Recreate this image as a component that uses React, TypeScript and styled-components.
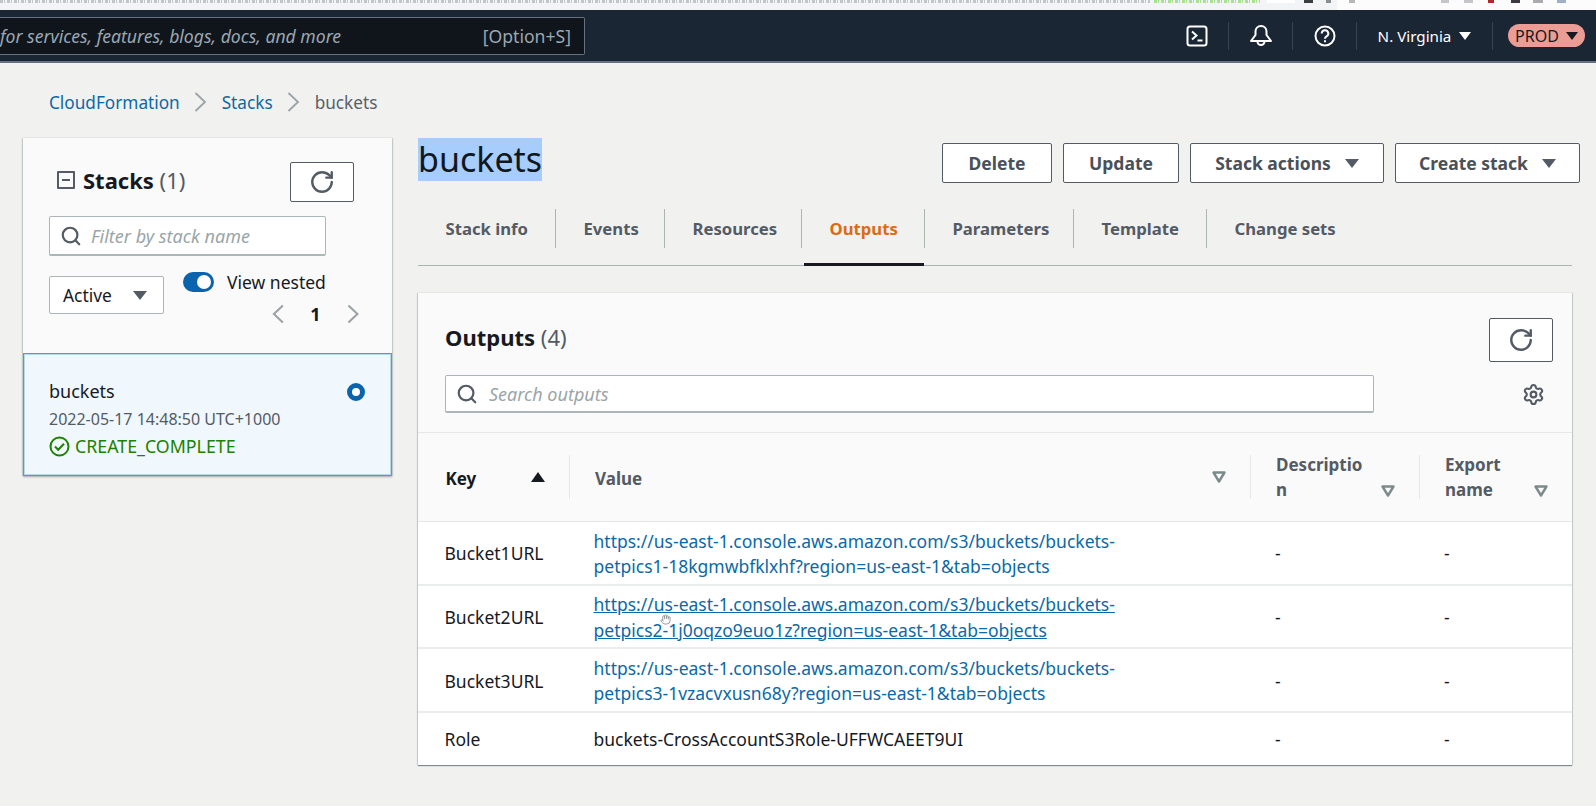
import { FC, ReactNode } from "react";
import styled, { createGlobalStyle } from "styled-components";
import { Hand, RotateCw, Search, Settings } from "lucide-react";

const FONT = `"Noto Sans", "Open Sans", sans-serif`;

const GlobalStyle = createGlobalStyle`
  html, body {
    margin: 0;
    padding: 0;
    background: #f1f1f0;
    font-family: ${FONT};
    font-size: 18px;
    color: #16191f;
  }
  body {
    width: 1596px;
    height: 806px;
    overflow: hidden;
  }
  * {
    box-sizing: border-box;
  }
`;

// the cropped browser address bar: only specks of it are visible
const BrowserStrip = styled.div`
  height: 10px;
  background: linear-gradient(to right, #f3f4f6 1337px, #fcfcfc 1337px);
  display: flex;
  align-items: flex-start;
`;

const StripMark = styled.span<{ $width: number; $gap?: number; $color: string; $dashed?: boolean }>`
  width: ${(p) => p.$width}px;
  height: 3px;
  margin-left: ${(p) => p.$gap ?? 0}px;
  background: ${(p) =>
    p.$dashed
      ? `repeating-linear-gradient(to right, ${p.$color} 0 3px, transparent 3px 4px, ${p.$color} 4px 5px, transparent 5px 7px)`
      : p.$color};
`;

const Header = styled.header`
  height: 53px;
  background: #1b2635;
  border-bottom: 2px solid #687180;
  display: flex;
  align-items: center;
  justify-content: space-between;
`;

const GlobalSearch = styled.div`
  width: 585px;
  height: 38px;
  background: #10151c;
  border: 1px solid #67727e;
  border-left: 0;
  border-radius: 0 2px 2px 0;
  display: flex;
  align-items: center;
  justify-content: space-between;
  padding-right: 13px;
  font-size: 17.6px;
  color: #9ba7b2;
  em {
    font-style: italic;
  }
`;

const HeaderTools = styled.div`
  display: flex;
  align-items: center;
  height: 100%;
  padding-right: 11px;
`;

const ToolCell = styled.div<{ $width: number }>`
  width: ${(p) => p.$width}px;
  height: 28px;
  border-right: 1px solid #39434f;
  display: flex;
  align-items: center;
  justify-content: center;
  color: #fff;
  font-size: 15.2px;
  gap: 8px;
  svg {
    display: block;
  }
`;

const ProdPill = styled.div`
  width: 77px;
  height: 23px;
  margin-left: 15px;
  border-radius: 12px;
  background: #eb9d95;
  color: #16191f;
  font-size: 16px;
  display: flex;
  align-items: center;
  justify-content: center;
  gap: 7px;
`;

const Caret = styled.span<{ $color: string; $size?: number }>`
  width: 0;
  height: 0;
  flex: none;
  border-left: ${(p) => p.$size ?? 6}px solid transparent;
  border-right: ${(p) => p.$size ?? 6}px solid transparent;
  border-top: ${(p) => Math.round((p.$size ?? 6) * 1.25)}px solid ${(p) => p.$color};
`;

const Breadcrumbs = styled.nav`
  display: flex;
  align-items: center;
  height: 26px;
  margin: 26px 0 23px 49px;
  gap: 14.5px;
  font-size: 17.2px;
  a {
    color: #0b69a8;
    text-decoration: none;
  }
  span {
    color: #596068;
  }
`;

const Content = styled.div`
  display: flex;
  align-items: flex-start;
  gap: 26px;
  padding-left: 23px;
`;

const Sidebar = styled.aside`
  width: 369px;
  box-shadow: 0 1px 2px rgba(0, 28, 36, 0.3), 1px 0 1px rgba(0, 28, 36, 0.1), -1px 0 1px rgba(0, 28, 36, 0.1);
`;

const SidebarTop = styled.div`
  height: 215px;
  background: #fafafa;
  padding-top: 24px;
`;

const SidebarTitleRow = styled.div`
  display: flex;
  align-items: center;
  justify-content: space-between;
  padding: 0 38px 0 34px;
`;

const SidebarTitle = styled.h2`
  display: flex;
  align-items: center;
  gap: 8px;
  margin: 0;
  padding-bottom: 4px;
  font-size: 22px;
  font-weight: 700;
  b {
    font-weight: 400;
    color: #545b64;
  }
`;

const CollapseBox = styled.span`
  width: 18px;
  height: 18px;
  border: 2px solid #545b64;
  border-radius: 1px;
  display: flex;
  align-items: center;
  justify-content: center;
  &::before {
    content: "";
    width: 8px;
    height: 2px;
    background: #545b64;
  }
`;

const IconButton = styled.button<{ $height: number }>`
  width: 64px;
  height: ${(p) => p.$height}px;
  padding: 0;
  background: #fff;
  border: 1px solid #545b64;
  border-radius: 2px;
  color: #545b64;
  display: flex;
  align-items: center;
  justify-content: center;
`;

const SearchField = styled.div<{ $width: number; $height: number; $gap: number }>`
  width: ${(p) => p.$width}px;
  height: ${(p) => p.$height}px;
  background: #fff;
  border: 1px solid #aab7b8;
  border-bottom-width: 2px;
  border-radius: 2px;
  display: flex;
  align-items: center;
  gap: ${(p) => p.$gap}px;
  padding-left: 10px;
  color: #545b64;
  font-size: 18px;
  em {
    color: #9aa5a8;
    font-style: italic;
  }
`;

const FilterRow = styled.div`
  margin: 14px 0 0 26px;
`;

const ControlRow = styled.div`
  display: flex;
  align-items: flex-start;
  margin: 16px 0 0 26px;
`;

const SelectBox = styled.div`
  width: 115px;
  height: 38px;
  margin-top: 4px;
  background: #fff;
  border: 1px solid #aab7b8;
  border-radius: 2px;
  display: flex;
  align-items: center;
  justify-content: space-between;
  padding: 0 16px 0 13px;
  font-size: 17.4px;
`;

const NestedColumn = styled.div`
  width: 176px;
  margin-left: 19px;
`;

const ToggleRow = styled.div`
  display: flex;
  align-items: center;
  gap: 13px;
  height: 20px;
  font-size: 17.5px;
  line-height: 20px;
`;

const Toggle = styled.span`
  width: 31px;
  height: 20px;
  border-radius: 10px;
  background: #0a64ad;
  display: flex;
  align-items: center;
  justify-content: flex-end;
  padding-right: 3px;
  &::after {
    content: "";
    width: 14px;
    height: 14px;
    border-radius: 50%;
    background: #fff;
  }
`;

const Pager = styled.div`
  display: flex;
  align-items: center;
  gap: 26px;
  height: 24px;
  margin: 10px 0 0 89px;
  font-size: 18px;
  font-weight: 700;
`;

const StackCard = styled.div`
  height: 123px;
  background: #f0f7fd;
  border: 1px solid #4f9fc0;
  box-shadow: inset 0 0 0 1px rgba(79, 159, 192, 0.35);
  padding: 24px 26px 0 25px;
  line-height: 27.5px;
`;

const StackName = styled.div`
  display: flex;
  align-items: center;
  justify-content: space-between;
`;

const RadioDot = styled.span`
  width: 18px;
  height: 18px;
  border-radius: 50%;
  border: 5px solid #0a64ad;
  background: #fff;
`;

const StackDate = styled.div`
  font-size: 16px;
  color: #545b64;
`;

const StackStatus = styled.div`
  display: flex;
  align-items: center;
  gap: 5px;
  color: #1d8102;
  font-size: 17.8px;
`;

const Main = styled.main`
  width: 1154px;
`;

const TitleRow = styled.div`
  display: flex;
  align-items: flex-start;
  justify-content: space-between;
  margin-right: -8px;
  height: 45px;
`;

const StackTitle = styled.h1`
  margin: 0;
  height: 43px;
  line-height: 43px;
  padding: 0;
  font-size: 34px;
  font-weight: 400;
  background: #a6cdfb;
  color: #101721;
`;

const Actions = styled.div`
  display: flex;
  gap: 11px;
  margin-top: 5px;
`;

const ActionButton = styled.button<{ $width: number }>`
  width: ${(p) => p.$width}px;
  height: 40px;
  padding: 0;
  background: #fff;
  border: 1px solid #545b64;
  border-radius: 2px;
  color: #4a5058;
  font-family: ${FONT};
  font-size: 17.5px;
  font-weight: 700;
  display: flex;
  align-items: center;
  justify-content: center;
  gap: 14px;
`;

const Tabs = styled.div`
  display: flex;
  margin-top: 21px;
  border-bottom: 1px solid #aeb4b4;
`;

const Tab = styled.div<{ $active?: boolean }>`
  position: relative;
  height: 62px;
  padding-top: 5px;
  margin-bottom: -1px;
  color: ${(p) => (p.$active ? "#dd6b10" : "#545b64")};
  font-size: 16.7px;
  font-weight: 700;
  &::after {
    content: "";
    display: ${(p) => (p.$active ? "block" : "none")};
    position: absolute;
    left: 2px;
    right: 1px;
    bottom: 0;
    height: 3px;
    background: #16191f;
  }
`;

const TabLabel = styled.div<{ $width: number; $last?: boolean }>`
  width: ${(p) => p.$width}px;
  height: 39px;
  padding-left: 27.5px;
  display: flex;
  align-items: center;
  border-right: ${(p) => (p.$last ? "0" : "1px solid #aeb4b4")};
`;

const OutputsPanel = styled.section`
  margin-top: 27px;
  background: #fff;
  box-shadow: 0 1px 1px rgba(0, 28, 36, 0.45), 1px 0 1px rgba(0, 28, 36, 0.12), -1px 0 1px rgba(0, 28, 36, 0.12);
`;

const PanelHead = styled.div`
  height: 140px;
  background: #fafafa;
  padding: 25px 19px 0 27px;
  border-bottom: 1px solid #e6e8e8;
`;

const PanelTitleRow = styled.div`
  display: flex;
  align-items: center;
  justify-content: space-between;
  height: 44px;
`;

const PanelTitle = styled.h2`
  margin: 0;
  padding-bottom: 6px;
  font-size: 22px;
  font-weight: 700;
  b {
    font-weight: 400;
    color: #545b64;
  }
`;

const PanelSearchRow = styled.div`
  display: flex;
  align-items: center;
  justify-content: space-between;
  margin-top: 13px;
  padding-right: 8px;
  svg.gear {
    color: #545b64;
  }
`;

const OutputsTable = styled.table`
  width: 1154px;
  table-layout: fixed;
  border-collapse: collapse;
`;

const HeadCell = styled.th<{ $width: number }>`
  width: ${(p) => p.$width}px;
  height: 88px;
  padding: 0;
  background: #fafafa;
  text-align: left;
  font-size: 17px;
  font-weight: 700;
  line-height: 25px;
  color: #545b64;
  border-bottom: 1px solid #e6e8e8;
`;

const HeadInner = styled.div<{ $first?: boolean; $sorted?: boolean; $wrapped?: boolean }>`
  height: 44px;
  border-left: ${(p) => (p.$first ? "0" : "1px solid #e6e8e8")};
  padding: 0 24px 0 ${(p) => (p.$first ? 27.5 : 25)}px;
  display: flex;
  align-items: ${(p) => (p.$wrapped ? "flex-end" : "center")};
  justify-content: space-between;
  color: ${(p) => (p.$sorted ? "#16191f" : "#545b64")};
  span.label {
    margin-top: ${(p) => (p.$wrapped ? 0 : 3)}px;
    margin-bottom: ${(p) => (p.$wrapped ? -3 : 0)}px;
  }
  svg {
    flex: none;
    margin-bottom: ${(p) => (p.$wrapped ? 2 : 0)}px;
  }
`;

const SortUp = styled.span`
  width: 0;
  height: 0;
  border-left: 7px solid transparent;
  border-right: 7px solid transparent;
  border-bottom: 10px solid #16191f;
`;

const Row = styled.tr<{ $height: number }>`
  height: ${(p) => p.$height}px;
  &:not(:first-child) td {
    border-top: 2px solid #eaeded;
  }
`;

const Cell = styled.td<{ $first?: boolean; $value?: boolean }>`
  padding: 3px 0 0 ${(p) => (p.$first ? 26.5 : p.$value ? 24.5 : 25)}px;
  font-size: 17.5px;
  line-height: 25.5px;
  vertical-align: middle;
  position: relative;
  color: #16191f;
`;

const OutputLink = styled.a<{ $hovered?: boolean }>`
  display: block;
  width: 560px;
  color: #0b69a8;
  text-decoration: ${(p) => (p.$hovered ? "underline" : "none")};
  overflow-wrap: anywhere;
`;

const Pointer = styled.span`
  position: absolute;
  left: 91px;
  top: 28px;
  color: #8d8f90;
  line-height: 0;
`;

const RefreshIcon: FC = () => <RotateCw size={26} strokeWidth={2.2} />;

const FilterCaret: FC = () => (
  <svg width="14" height="12" viewBox="0 0 14 12">
    <path d="M1.5 1.5h11L7 10.5z" fill="none" stroke="#7d8a8c" strokeWidth="2.4" strokeLinejoin="round" />
  </svg>
);

// thin grey chevron used by breadcrumbs and pager
const Chevron: FC<{ left?: boolean; weight?: number }> = ({ left, weight = 1.8 }) => (
  <svg width="13" height="22" viewBox="0 0 13 22" fill="none" stroke="#9aa3a8" strokeWidth={weight}>
    <path d={left ? "M11.5 2L2 11l9.5 9" : "M1.5 2L11 11l-9.5 9"} />
  </svg>
);

const Th: FC<{ width: number; first?: boolean; sorted?: boolean; wrapped?: boolean; children: ReactNode }> = ({
  width,
  first,
  sorted,
  wrapped,
  children,
}) => (
  <HeadCell $width={width}>
    <HeadInner $first={first} $sorted={sorted} $wrapped={wrapped}>
      <span className="label">{children}</span>
      {sorted ? <SortUp /> : <FilterCaret />}
    </HeadInner>
  </HeadCell>
);

const outputs = [
  { key: "Bucket1URL", first: "https://us-east-1.console.aws.amazon.com/s3/buckets/buckets-", second: "petpics1-18kgmwbfklxhf?region=us-east-1&tab=objects" },
  { key: "Bucket2URL", first: "https://us-east-1.console.aws.amazon.com/s3/buckets/buckets-", second: "petpics2-1j0oqzo9euo1z?region=us-east-1&tab=objects", hovered: true },
  { key: "Bucket3URL", first: "https://us-east-1.console.aws.amazon.com/s3/buckets/buckets-", second: "petpics3-1vzacvxusn68y?region=us-east-1&tab=objects" },
];

const tabs = [
  { label: "Stack info", width: 138 },
  { label: "Events", width: 109 },
  { label: "Resources", width: 137 },
  { label: "Outputs", width: 123, active: true },
  { label: "Parameters", width: 149 },
  { label: "Template", width: 133 },
  { label: "Change sets", width: 160, last: true },
];

const stripMarks = [
  { width: 1150, color: "#c2c4c8", dashed: true },
  { width: 106, gap: 4, color: "#a8e28e", dashed: true },
  { width: 28, gap: 7, color: "#ffffff" },
  { width: 9, gap: 9, color: "#3a3c40" },
  { width: 5, gap: 13, color: "#8a8c90" },
  { width: 6, gap: 18, color: "#b5b7ba" },
  { width: 8, gap: 86, color: "#c4c6c9" },
  { width: 9, gap: 15, color: "#c4c6c9" },
  { width: 6, gap: 15, color: "#b3262a" },
  { width: 9, gap: 17, color: "#3a3c40" },
  { width: 10, gap: 13, color: "#a9abae" },
  { width: 9, gap: 14, color: "#9fb1c4" },
];

const App: FC = () => {
  return (
    <>
      <GlobalStyle />
      <BrowserStrip>
        {stripMarks.map((mark, i) => (
          <StripMark key={i} $width={mark.width} $gap={mark.gap} $color={mark.color} $dashed={mark.dashed} />
        ))}
      </BrowserStrip>
      <Header>
        <GlobalSearch>
          <em>for services, features, blogs, docs, and more</em>
          <span>[Option+S]</span>
        </GlobalSearch>
        <HeaderTools>
          <ToolCell $width={64}>
            <svg width="22" height="22" viewBox="0 0 22 22" fill="none" stroke="#fff" strokeWidth="2">
              <rect x="1.5" y="1.5" width="19" height="19" rx="2.5" />
              <path d="M6 6.5l4.5 4-4.5 4M11.5 15.5h5" />
            </svg>
          </ToolCell>
          <ToolCell $width={64}>
            <svg width="24" height="24" viewBox="0 0 24 24" fill="none" stroke="#fff" strokeWidth="2" strokeLinejoin="round">
              <path d="M12 2c-3.3 0-5.5 2.5-5.5 5.5V11L2 17h20l-4.500-6V7.500C17.500 4.500 15.300 2 12 2z" />
              <path d="M8.5 17.500a3.500 3.500 0 0 0 7 0" />
            </svg>
          </ToolCell>
          <ToolCell $width={64}>
            <svg width="22" height="22" viewBox="0 0 22 22" fill="none" stroke="#fff" strokeWidth="2">
              <circle cx="11" cy="11" r="9.5" />
              <path d="M7.7 8.5a3.3 3.3 0 1 1 4.8 2.900c-1 .6-1.500 1-1.500 2.300" />
              <path d="M11 15.200v2" />
            </svg>
          </ToolCell>
          <ToolCell $width={136}>
            N. Virginia <Caret $color="#fff" $size={6} />
          </ToolCell>
          <ProdPill>
            PROD <Caret $color="#16191f" $size={6} />
          </ProdPill>
        </HeaderTools>
      </Header>

      <Breadcrumbs>
        <a href="#cf">CloudFormation</a>
        <Chevron />
        <a href="#stacks">Stacks</a>
        <Chevron />
        <span>buckets</span>
      </Breadcrumbs>

      <Content>
        <Sidebar>
          <SidebarTop>
            <SidebarTitleRow>
              <SidebarTitle>
                <CollapseBox />
                <span>
                  Stacks <b>(1)</b>
                </span>
              </SidebarTitle>
              <IconButton $height={40}>
                <RefreshIcon />
              </IconButton>
            </SidebarTitleRow>
            <FilterRow>
              <SearchField $width={277} $height={40} $gap={9}>
                <Search size={22} strokeWidth={2.4} />
                <em>Filter by stack name</em>
              </SearchField>
            </FilterRow>
            <ControlRow>
              <SelectBox>
                Active <Caret $color="#545b64" $size={7} />
              </SelectBox>
              <NestedColumn>
                <ToggleRow>
                  <Toggle />
                  View nested
                </ToggleRow>
                <Pager>
                  <Chevron left weight={2.2} />
                  <span>1</span>
                  <Chevron weight={2.2} />
                </Pager>
              </NestedColumn>
            </ControlRow>
          </SidebarTop>
          <StackCard>
            <StackName>
              buckets
              <RadioDot />
            </StackName>
            <StackDate>2022-05-17 14:48:50 UTC+1000</StackDate>
            <StackStatus>
              <svg width="21" height="21" viewBox="0 0 21 21" fill="none" stroke="#1d8102" strokeWidth="2">
                <circle cx="10.5" cy="10.5" r="9" />
                <path d="M6 10.5l3.2 3.2 5.8-6" />
              </svg>
              CREATE_COMPLETE
            </StackStatus>
          </StackCard>
        </Sidebar>

        <Main>
          <TitleRow>
            <StackTitle>buckets</StackTitle>
            <Actions>
              <ActionButton $width={110}>Delete</ActionButton>
              <ActionButton $width={116}>Update</ActionButton>
              <ActionButton $width={194}>
                Stack actions <Caret $color="#545b64" $size={7} />
              </ActionButton>
              <ActionButton $width={185}>
                Create stack <Caret $color="#545b64" $size={7} />
              </ActionButton>
            </Actions>
          </TitleRow>

          <Tabs>
            {tabs.map((tab) => (
              <Tab key={tab.label} $active={tab.active}>
                <TabLabel $width={tab.width} $last={tab.last}>
                  {tab.label}
                </TabLabel>
              </Tab>
            ))}
          </Tabs>

          <OutputsPanel>
            <PanelHead>
              <PanelTitleRow>
                <PanelTitle>
                  Outputs <b>(4)</b>
                </PanelTitle>
                <IconButton $height={44}>
                  <RefreshIcon />
                </IconButton>
              </PanelTitleRow>
              <PanelSearchRow>
                <SearchField $width={929} $height={38} $gap={11}>
                  <Search size={22} strokeWidth={2.4} />
                  <em>Search outputs</em>
                </SearchField>
                <Settings className="gear" size={23} strokeWidth={2.2} />
              </PanelSearchRow>
            </PanelHead>

            <OutputsTable>
              <thead>
                <tr>
                  <Th width={151} first sorted>
                    Key
                  </Th>
                  <Th width={681}>Value</Th>
                  <Th width={169} wrapped>
                    Descriptio
                    <br />n
                  </Th>
                  <Th width={153} wrapped>
                    Export
                    <br />
                    name
                  </Th>
                </tr>
              </thead>
              <tbody>
                {outputs.map((row) => (
                  <Row key={row.key} $height={63.5}>
                    <Cell $first>{row.key}</Cell>
                    <Cell $value>
                      <OutputLink href="#output" $hovered={row.hovered}>
                        {row.first}
                        <br />
                        {row.second}
                      </OutputLink>
                      {row.hovered && (
                        <Pointer>
                          <Hand size={11} />
                        </Pointer>
                      )}
                    </Cell>
                    <Cell>-</Cell>
                    <Cell>-</Cell>
                  </Row>
                ))}
                <Row $height={53}>
                  <Cell $first>Role</Cell>
                  <Cell $value>buckets-CrossAccountS3Role-UFFWCAEET9UI</Cell>
                  <Cell>-</Cell>
                  <Cell>-</Cell>
                </Row>
              </tbody>
            </OutputsTable>
          </OutputsPanel>
        </Main>
      </Content>
    </>
  );
};

export default App;
